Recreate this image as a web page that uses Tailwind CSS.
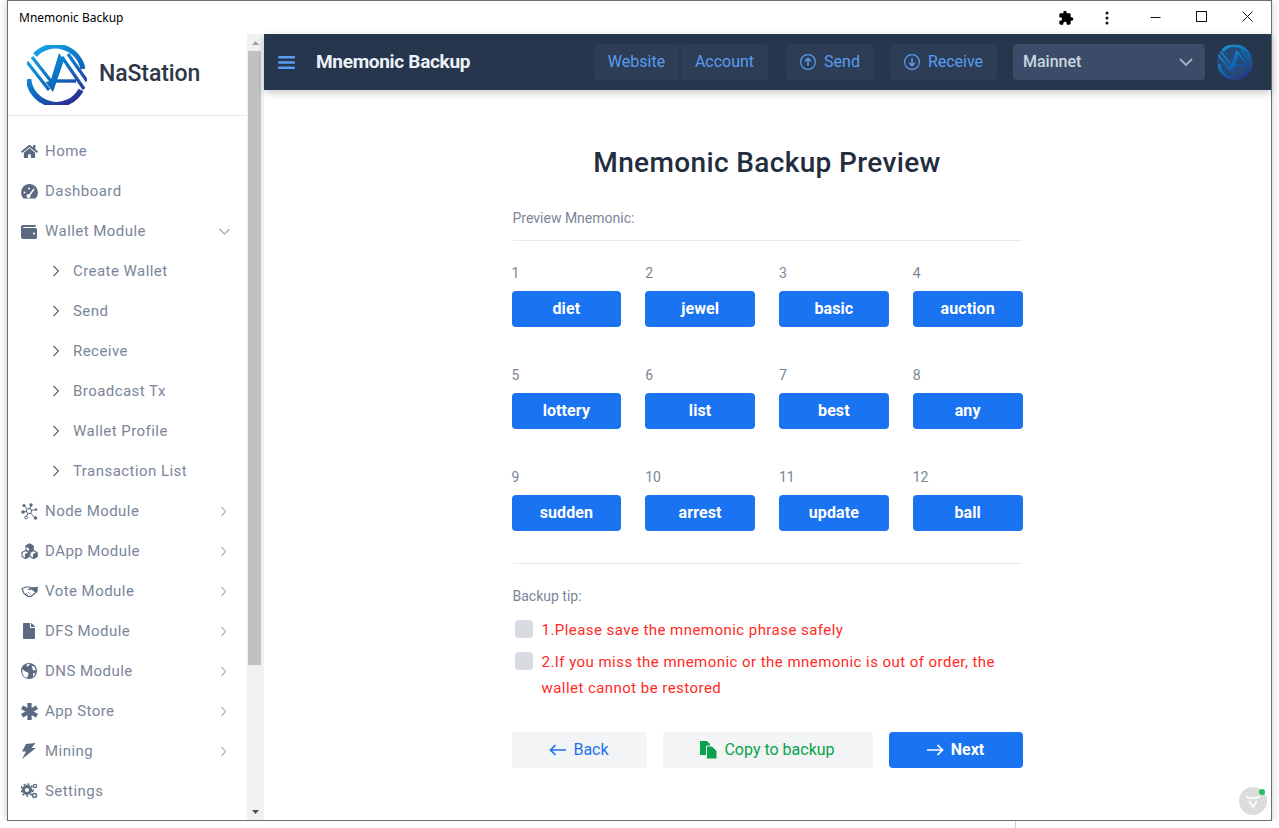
<!doctype html>
<html>
<head>
<meta charset="utf-8">
<script src="https://cdn.jsdelivr.net/npm/@tailwindcss/browser@4"></script>
</head>
<body class="bg-white overflow-hidden font-['Roboto',sans-serif]">
<svg width="0" height="0" class="absolute">
  <defs>
    <linearGradient id="lg" gradientUnits="userSpaceOnUse" x1="8" y1="2" x2="46" y2="58"><stop offset="0" stop-color="#18a6e4"/><stop offset="0.55" stop-color="#0a70c2"/><stop offset="1" stop-color="#2c2a90"/></linearGradient>
    <symbol id="logo" viewBox="0 0 60 60">
      <g fill="none" stroke="url(#lg)">
        <path stroke-width="5" d="M8 10A28 28 0 0 1 56 24"/>
        <path stroke-width="5.5" d="M1.5 34A28 28 0 0 0 54 45"/>
        <path stroke-width="3.2" d="M0 17L22 45"/>
        <path stroke-width="3.2" d="M5 12L27 40"/>
        <path stroke-width="3.2" d="M41 9L60 36"/>
        <path stroke-width="3.2" d="M35 12L57 44"/>
        <path stroke-width="3.4" d="M29 36H49"/>
      </g>
      <path fill="url(#lg)" d="M32 8L37 15L26 47L18.5 37L23.5 36Z"/>
    </symbol>
    <symbol id="chev-r" viewBox="0 0 8 12"><path d="M1.5 1L6.5 6L1.5 11" fill="none" stroke="currentColor" stroke-width="1.2"/></symbol>
  </defs>
</svg>
<div class="ml-[7px] w-[1265px] h-[821px] border border-[#6e6e6e] flex flex-col bg-white shadow-[0_0_8px_rgba(0,0,0,0.22)]">
  <!-- title bar -->
  <div class="h-[33px] shrink-0 flex items-center pl-[11px] text-[12px] text-black font-['Noto_Sans',sans-serif]">
    <span class="flex-1 pt-px">Mnemonic Backup</span>
    <svg class="w-[16px] h-[16px] mr-[31px]" viewBox="0 0 24 24" fill="#000"><path d="M20.5 11H19V7c0-1.1-.9-2-2-2h-4V3.5a2.5 2.5 0 0 0-5 0V5H4c-1.1 0-2 .9-2 2v3.8h1.5a2.7 2.7 0 0 1 0 5.4H2V20c0 1.1.9 2 2 2h3.8v-1.5a2.7 2.7 0 0 1 5.4 0V22H17c1.1 0 2-.9 2-2v-4h1.5a2.5 2.5 0 0 0 0-5z"/></svg>
    <svg class="w-[4px] h-[14px] mr-[41px]" viewBox="0 0 4 14" fill="#111"><circle cx="2" cy="2" r="1.5"/><circle cx="2" cy="7" r="1.5"/><circle cx="2" cy="12" r="1.5"/></svg>
    <svg class="w-[11px] h-[11px] mr-[35px]" viewBox="0 0 11 11"><path d="M0.5 5.5H10.5" stroke="#111" stroke-width="1"/></svg>
    <svg class="w-[11px] h-[11px] mr-[35px] -mt-[3px]" viewBox="0 0 11 11"><rect x="0.5" y="0.5" width="10" height="10" fill="none" stroke="#111"/></svg>
    <svg class="w-[11px] h-[11px] mr-[18px] -mt-[3px]" viewBox="0 0 11 11"><path d="M0.5 0.5L10.5 10.5M10.5 0.5L0.5 10.5" stroke="#111" stroke-width="1"/></svg>
  </div>
  <div class="flex flex-1 min-h-0">
    <!-- sidebar -->
    <aside class="w-[239px] shrink-0 flex flex-col text-[15px] text-[#7a8698] tracking-[0.45px]">
      <div class="h-[82px] border-b border-[#e8eaee] flex items-center pl-[19px] shrink-0">
        <svg class="w-[60px] h-[60px]"><use href="#logo"/></svg>
        <span class="ml-[12px] text-[23px] font-medium text-[#2d3748] tracking-[-0.1px]">NaStation</span>
      </div>
      <nav class="pt-[15px] flex flex-col">
        <a class="h-10 flex items-center pl-[13px]"><span class="w-[24px] flex justify-start"><svg class="w-[17px] h-[15px]" viewBox="0 0 576 512" fill="#5a6a80"><path d="M280.37 148.26L96 300.11V464a16 16 0 0 0 16 16l112.06-.29a16 16 0 0 0 15.92-16V368a16 16 0 0 1 16-16h64a16 16 0 0 1 16 16v95.64a16 16 0 0 0 16 16.05L464 480a16 16 0 0 0 16-16V300L295.67 148.26a12.19 12.19 0 0 0-15.3 0zM571.6 251.47L488 182.56V44.05a12 12 0 0 0-12-12h-56a12 12 0 0 0-12 12v72.61L318.47 43a48 48 0 0 0-61 0L4.34 251.47a12 12 0 0 0-1.6 16.9l25.5 31A12 12 0 0 0 45.15 301l235.22-193.74a12.19 12.19 0 0 1 15.3 0L530.9 301a12 12 0 0 0 16.9-1.6l25.5-31a12 12 0 0 0-1.7-16.93z"/></svg></span>Home</a>
        <a class="h-10 flex items-center pl-[13px]"><span class="w-[24px]"><svg class="w-[17px] h-[15px] block" viewBox="0 0 17 15"><path d="M2.5 14.5A8.5 8.5 0 1 1 14.5 14.5Z" fill="#5a6a80"/><path d="M8 12L13 5" stroke="#fff" stroke-width="1.4"/><circle cx="7.5" cy="12" r="2" fill="#fff"/><circle cx="3.5" cy="8.5" r="1" fill="#fff"/><circle cx="8" cy="4.5" r="1" fill="#fff"/></svg></span>Dashboard</a>
        <a class="h-10 flex items-center pl-[13px]"><span class="w-[24px]"><svg class="w-[16px] h-[15px]" viewBox="0 0 512 480" fill="#5a6a80"><path d="M461.2 128H80c-8.84 0-16-7.16-16-16s7.16-16 16-16h384c8.84 0 16-7.16 16-16 0-26.51-21.49-48-48-48H64C28.65 32 0 60.65 0 96v320c0 35.35 28.65 64 64 64h397.2c28.02 0 50.8-21.53 50.8-48V176c0-26.47-22.78-48-50.8-48zM416 336c-17.67 0-32-14.33-32-32s14.33-32 32-32 32 14.33 32 32-14.33 32-32 32z"/></svg></span><span class="flex-1">Wallet Module</span><svg class="w-[11px] h-[7px] mr-[17px]" viewBox="0 0 11 7"><path d="M0.5 1L5.5 6L10.5 1" fill="none" stroke="#9aa5b4" stroke-width="1.1"/></svg></a>
        <a class="h-10 flex items-center pl-[44px]"><svg class="w-[8px] h-[12px] mr-[13px] text-[#5a6a80]"><use href="#chev-r"/></svg>Create Wallet</a>
        <a class="h-10 flex items-center pl-[44px]"><svg class="w-[8px] h-[12px] mr-[13px] text-[#5a6a80]"><use href="#chev-r"/></svg>Send</a>
        <a class="h-10 flex items-center pl-[44px]"><svg class="w-[8px] h-[12px] mr-[13px] text-[#5a6a80]"><use href="#chev-r"/></svg>Receive</a>
        <a class="h-10 flex items-center pl-[44px]"><svg class="w-[8px] h-[12px] mr-[13px] text-[#5a6a80]"><use href="#chev-r"/></svg>Broadcast Tx</a>
        <a class="h-10 flex items-center pl-[44px]"><svg class="w-[8px] h-[12px] mr-[13px] text-[#5a6a80]"><use href="#chev-r"/></svg>Wallet Profile</a>
        <a class="h-10 flex items-center pl-[44px]"><svg class="w-[8px] h-[12px] mr-[13px] text-[#5a6a80]"><use href="#chev-r"/></svg>Transaction List</a>
        <a class="h-10 flex items-center pl-[13px]"><span class="w-[24px]"><svg class="w-[17px] h-[17px] block" viewBox="0 0 17 17"><g stroke="#5a6a80" stroke-width="1"><path d="M8 8L3 2.5M8 8L10 2M8 8L15 6.5M8 8L2 9M8 8L5 14.5M8 8L14 15"/></g><g fill="#5a6a80"><circle cx="3" cy="2.5" r="1.6"/><circle cx="10" cy="2" r="1.7"/><circle cx="15" cy="6.5" r="1.3"/><circle cx="2" cy="9" r="1.8"/><circle cx="14.5" cy="15" r="1.8"/></g><circle cx="5" cy="14.5" r="1.4" fill="#fff" stroke="#5a6a80"/><circle cx="8" cy="8" r="2.6" fill="#fff" stroke="#5a6a80"/></svg></span><span class="flex-1">Node Module</span><svg class="w-[7px] h-[11px] mr-[20px] text-[#9aa5b4]"><use href="#chev-r"/></svg></a>
        <a class="h-10 flex items-center pl-[13px]"><span class="w-[24px]"><svg class="w-[17px] h-[16px] block" viewBox="0 0 17 16"><g stroke="#5a6a80" stroke-width="1.1" stroke-linejoin="round"><path d="M8.5 1L12 3V7L8.5 9L5 7V3Z" fill="#fff"/><path d="M5 3L8.5 5L12 3L8.5 1Z M8.5 5V9L12 7V3Z" fill="#5a6a80"/><path d="M4.5 7.5L8 9.5V13.5L4.5 15.5L1 13.5V9.5Z" fill="#fff"/><path d="M4.5 11.5V15.5L8 13.5V9.5Z" fill="#5a6a80"/><path d="M12.5 7.5L16 9.5V13.5L12.5 15.5L9 13.5V9.5Z" fill="#fff"/><path d="M12.5 11.5V15.5L16 13.5V9.5Z" fill="#5a6a80"/></g></svg></span><span class="flex-1">DApp Module</span><svg class="w-[7px] h-[11px] mr-[20px] text-[#9aa5b4]"><use href="#chev-r"/></svg></a>
        <a class="h-10 flex items-center pl-[13px]"><span class="w-[24px]"><svg class="w-[17px] h-[11px] block" viewBox="0 0 17 11"><path d="M1 2.5L5 1H8L11 2L16 1.5L15.5 6L10 10.5H7L3 7.5Z" fill="#fff" stroke="#5a6a80" stroke-width="1.2"/><path d="M7 3L11 1.5L16.5 1V5.5L14.5 6.5L10.5 3.5L8 4.5Z" fill="#5a6a80"/><path d="M5 7L7.5 9.5M7 6L9.5 8.5" stroke="#5a6a80" stroke-width="0.8"/></svg></span><span class="flex-1">Vote Module</span><svg class="w-[7px] h-[11px] mr-[20px] text-[#9aa5b4]"><use href="#chev-r"/></svg></a>
        <a class="h-10 flex items-center pl-[13px]"><span class="w-[24px] pl-[2px]"><svg class="w-[12px] h-[16px] block" viewBox="0 0 384 512" fill="#5a6a80"><path d="M224 136V0H24C10.7 0 0 10.7 0 24v464c0 13.3 10.7 24 24 24h336c13.3 0 24-10.7 24-24V160H248c-13.2 0-24-10.8-24-24zm160-14.1v6.1H256V0h6.1c6.4 0 12.5 2.5 17 7l97.9 98c4.5 4.5 7 10.6 7 16.9z"/></svg></span><span class="flex-1">DFS Module</span><svg class="w-[7px] h-[11px] mr-[20px] text-[#9aa5b4]"><use href="#chev-r"/></svg></a>
        <a class="h-10 flex items-center pl-[13px]"><span class="w-[24px]"><svg class="w-[16px] h-[16px] block" viewBox="0 0 16 16"><circle cx="8" cy="8" r="8" fill="#5a6a80"/><path d="M1.5 6L4 8.5L6.5 9L7.5 11L6 15L3 13.5L1.2 10ZM6 1L9 1.2L7.5 3L5.5 3.5ZM10.5 2.5L13.5 4L14.8 7L12 7.5L11.5 5.5ZM12 10L14.5 10.5L12 14Z" fill="#fff"/></svg></span><span class="flex-1">DNS Module</span><svg class="w-[7px] h-[11px] mr-[20px] text-[#9aa5b4]"><use href="#chev-r"/></svg></a>
        <a class="h-10 flex items-center pl-[13px]"><span class="w-[24px]"><svg class="w-[17px] h-[17px] block" viewBox="0 0 16 16"><path d="M8 0V16M1 4L15 12M15 4L1 12" stroke="#5a6a80" stroke-width="4"/></svg></span><span class="flex-1">App Store</span><svg class="w-[7px] h-[11px] mr-[20px] text-[#9aa5b4]"><use href="#chev-r"/></svg></a>
        <a class="h-10 flex items-center pl-[13px]"><span class="w-[24px]"><svg class="w-[15px] h-[16px] block" viewBox="0 0 15 16" fill="#5a6a80"><path d="M5 1L14.5 0L10.5 5H15L1 16L5 8.5H1Z"/></svg></span><span class="flex-1">Mining</span><svg class="w-[7px] h-[11px] mr-[20px] text-[#9aa5b4]"><use href="#chev-r"/></svg></a>
        <a class="h-10 flex items-center pl-[13px]"><span class="w-[24px]"><svg class="w-[17px] h-[16px] block" viewBox="0 0 17 16"><circle cx="6" cy="7" r="3.6" fill="none" stroke="#5a6a80" stroke-width="3"/><circle cx="6" cy="7" r="6" fill="none" stroke="#5a6a80" stroke-width="1.6" stroke-dasharray="2 2"/><circle cx="13.5" cy="12.5" r="2" fill="none" stroke="#5a6a80" stroke-width="1.5"/><circle cx="14" cy="3" r="1.6" fill="none" stroke="#5a6a80" stroke-width="1.2"/></svg></span>Settings</a>
      </nav>
    </aside>
    <!-- scrollbar -->
    <div class="w-[17px] shrink-0 bg-[#f1f1f1] flex flex-col items-center">
      <svg class="w-[7px] h-[17px] shrink-0" viewBox="0 0 7 17"><path d="M0 11L3.5 7L7 11Z" fill="#a3a3a3"/></svg>
      <div class="w-[13px] h-[614px] bg-[#c1c1c1] -ml-[2px]"></div>
      <div class="flex-1"></div>
      <svg class="w-[7px] h-[17px] shrink-0" viewBox="0 0 7 17"><path d="M0 7L3.5 11L7 7Z" fill="#505050"/></svg>
    </div>
    <!-- main -->
    <main class="flex-1 min-w-0 flex flex-col relative">
      <header class="h-[56px] shrink-0 bg-[#25364d] flex items-center shadow-[0_3px_8px_rgba(0,0,0,0.2)] relative text-[16px] text-[#5a9cf0]">
        <svg class="w-[17px] h-[13px] ml-[14px]" viewBox="0 0 17 13" fill="#5a9cf0"><rect width="17" height="2.6" rx="1"/><rect y="5.2" width="17" height="2.6" rx="1"/><rect y="10.4" width="17" height="2.6" rx="1"/></svg>
        <span class="ml-[21px] text-[19px] font-bold text-[#edf2f7] tracking-[-0.3px] flex-1">Mnemonic Backup</span>
        <div class="flex mr-[18px] gap-[2px]">
          <span class="h-[36px] w-[85px] bg-[#2c3d55] rounded-l flex items-center justify-center">Website</span>
          <span class="h-[36px] w-[87px] bg-[#2c3d55] rounded-r flex items-center justify-center">Account</span>
        </div>
        <span class="h-[36px] w-[88px] bg-[#2c3d55] rounded flex items-center justify-center gap-2 mr-[16px]"><svg class="w-[16px] h-[16px]" viewBox="0 0 16 16" fill="none" stroke="#5a9cf0" stroke-width="1.2"><circle cx="8" cy="8" r="7.4"/><path d="M8 12V4.5M5 7.2L8 4.2L11 7.2" stroke-width="1.5"/></svg>Send</span>
        <span class="h-[36px] w-[107px] bg-[#2c3d55] rounded flex items-center justify-center gap-2 mr-[16px]"><svg class="w-[16px] h-[16px]" viewBox="0 0 16 16" fill="none" stroke="#5a9cf0" stroke-width="1.2"><circle cx="8" cy="8" r="7.4"/><path d="M8 4V11.5M5 8.8L8 11.8L11 8.8" stroke-width="1.5"/></svg>Receive</span>
        <span class="h-[36px] w-[192px] bg-[#3a4c67] rounded flex items-center pl-[10px] pr-[12px] text-[#cbd5e0] font-medium justify-between mr-[12px]">Mainnet<svg class="w-[14px] h-[8px]" viewBox="0 0 14 8"><path d="M1 1L7 7L13 1" fill="none" stroke="#a5b1c2" stroke-width="1.8"/></svg></span>
        <span class="w-[36px] h-[36px] rounded-full bg-[#254a78] mr-[18px] flex items-center justify-center"><svg class="w-[34px] h-[34px] opacity-80"><use href="#logo"/></svg></span>
      </header>
      <div class="flex-1 flex flex-col items-center min-h-0">
        <div class="w-[511px] -ml-[1px]">
          <h1 class="mt-[55px] h-[36px] leading-[36px] text-center text-[28px] font-medium text-[#232d3d] tracking-[0.36px]">Mnemonic Backup Preview</h1>
          <p class="mt-[27px] pl-px text-[14px] leading-[20px] text-[#7a8698]">Preview Mnemonic:</p>
          <div class="mt-[12px] mx-px h-px bg-[#e8eaee]"></div>
          <div class="grid grid-cols-4 gap-x-[24px] gap-y-[39px] mt-[23px] text-[14px]">
            <div><div class="h-[18px] leading-[18px] mb-[9px] text-[#7a8698]">1</div><div class="h-[36px] rounded bg-[#1a73f0] text-white text-[16px] tracking-[0.1px] font-bold flex items-center justify-center">diet</div></div>
            <div><div class="h-[18px] leading-[18px] mb-[9px] text-[#7a8698]">2</div><div class="h-[36px] rounded bg-[#1a73f0] text-white text-[16px] tracking-[0.1px] font-bold flex items-center justify-center">jewel</div></div>
            <div><div class="h-[18px] leading-[18px] mb-[9px] text-[#7a8698]">3</div><div class="h-[36px] rounded bg-[#1a73f0] text-white text-[16px] tracking-[0.1px] font-bold flex items-center justify-center">basic</div></div>
            <div><div class="h-[18px] leading-[18px] mb-[9px] text-[#7a8698]">4</div><div class="h-[36px] rounded bg-[#1a73f0] text-white text-[16px] tracking-[0.1px] font-bold flex items-center justify-center">auction</div></div>
            <div><div class="h-[18px] leading-[18px] mb-[9px] text-[#7a8698]">5</div><div class="h-[36px] rounded bg-[#1a73f0] text-white text-[16px] tracking-[0.1px] font-bold flex items-center justify-center">lottery</div></div>
            <div><div class="h-[18px] leading-[18px] mb-[9px] text-[#7a8698]">6</div><div class="h-[36px] rounded bg-[#1a73f0] text-white text-[16px] tracking-[0.1px] font-bold flex items-center justify-center">list</div></div>
            <div><div class="h-[18px] leading-[18px] mb-[9px] text-[#7a8698]">7</div><div class="h-[36px] rounded bg-[#1a73f0] text-white text-[16px] tracking-[0.1px] font-bold flex items-center justify-center">best</div></div>
            <div><div class="h-[18px] leading-[18px] mb-[9px] text-[#7a8698]">8</div><div class="h-[36px] rounded bg-[#1a73f0] text-white text-[16px] tracking-[0.1px] font-bold flex items-center justify-center">any</div></div>
            <div><div class="h-[18px] leading-[18px] mb-[9px] text-[#7a8698]">9</div><div class="h-[36px] rounded bg-[#1a73f0] text-white text-[16px] tracking-[0.1px] font-bold flex items-center justify-center">sudden</div></div>
            <div><div class="h-[18px] leading-[18px] mb-[9px] text-[#7a8698]">10</div><div class="h-[36px] rounded bg-[#1a73f0] text-white text-[16px] tracking-[0.1px] font-bold flex items-center justify-center">arrest</div></div>
            <div><div class="h-[18px] leading-[18px] mb-[9px] text-[#7a8698]">11</div><div class="h-[36px] rounded bg-[#1a73f0] text-white text-[16px] tracking-[0.1px] font-bold flex items-center justify-center">update</div></div>
            <div><div class="h-[18px] leading-[18px] mb-[9px] text-[#7a8698]">12</div><div class="h-[36px] rounded bg-[#1a73f0] text-white text-[16px] tracking-[0.1px] font-bold flex items-center justify-center">ball</div></div>
          </div>
          <div class="mt-[32px] mx-px h-px bg-[#e8eaee]"></div>
          <p class="mt-[22px] pl-px text-[14px] leading-[20px] text-[#7a8698]">Backup tip:</p>
          <div class="mt-[14px] flex pl-[3px] text-[15px] leading-[26px] text-[#ff2a1f] tracking-[0.45px]"><span class="w-[18px] h-[18px] rounded bg-[#d8dce2] mr-[9px] shrink-0"></span><span class="-mt-[3px]">1.Please save the mnemonic phrase safely</span></div>
          <div class="mt-[6px] flex pl-[3px] text-[15px] leading-[26px] text-[#ff2a1f] tracking-[0.45px]"><span class="w-[18px] h-[18px] rounded bg-[#d8dce2] mt-[3px] mr-[9px] shrink-0"></span><span>2.If you miss the mnemonic or the mnemonic is out of order, the wallet cannot be restored</span></div>
          <div class="flex mt-[31px] gap-[16px] text-[16px]">
            <span class="h-[36px] w-[135px] rounded bg-[#f3f4f6] text-[#1a73f0] flex items-center justify-center gap-[7px]"><svg class="w-[17px] h-[12px]" viewBox="0 0 17 12" fill="none" stroke="#1a73f0" stroke-width="1.7"><path d="M17 6H1.5M6.5 1L1.5 6L6.5 11"/></svg>Back</span>
            <span class="h-[36px] w-[210px] rounded bg-[#f3f4f6] text-[#07a34a] flex items-center justify-center gap-[7px]"><svg class="w-[17px] h-[18px]" viewBox="0 0 17 18" fill="#07a34a"><path d="M0 0H7L10 3V14H0Z"/><path d="M6.5 5H12L17 10V18H6.5Z" stroke="#f3f4f6" stroke-width="1"/></svg>Copy to backup</span>
            <span class="h-[36px] w-[134px] rounded bg-[#1a73f0] text-white font-bold flex items-center justify-center gap-[7px]"><svg class="w-[17px] h-[12px]" viewBox="0 0 17 12" fill="none" stroke="#fff" stroke-width="1.7"><path d="M0 6H15.5M10.5 1L15.5 6L10.5 11"/></svg>Next</span>
          </div>
        </div>
      </div>
      <div class="absolute right-[4px] bottom-[5px] w-[28px] h-[28px] rounded-full bg-[#dcdcdc] flex items-center justify-center">
        <svg class="w-[16px] h-[16px]" viewBox="0 0 16 16" fill="none" stroke="#fff" stroke-width="1.6"><path d="M1 3C3 5 4 5 8 5S13 5 15 3M4 8L8 14L12 8"/></svg>
        <span class="absolute right-[2px] top-[2px] w-[6px] h-[6px] rounded-full bg-[#1ec15f]"></span>
      </div>
    </main>
  </div>
</div>
<div class="absolute left-[1015px] top-[821px] w-px h-[7px] bg-[#cfcfcf]"></div>
</body>
</html>
